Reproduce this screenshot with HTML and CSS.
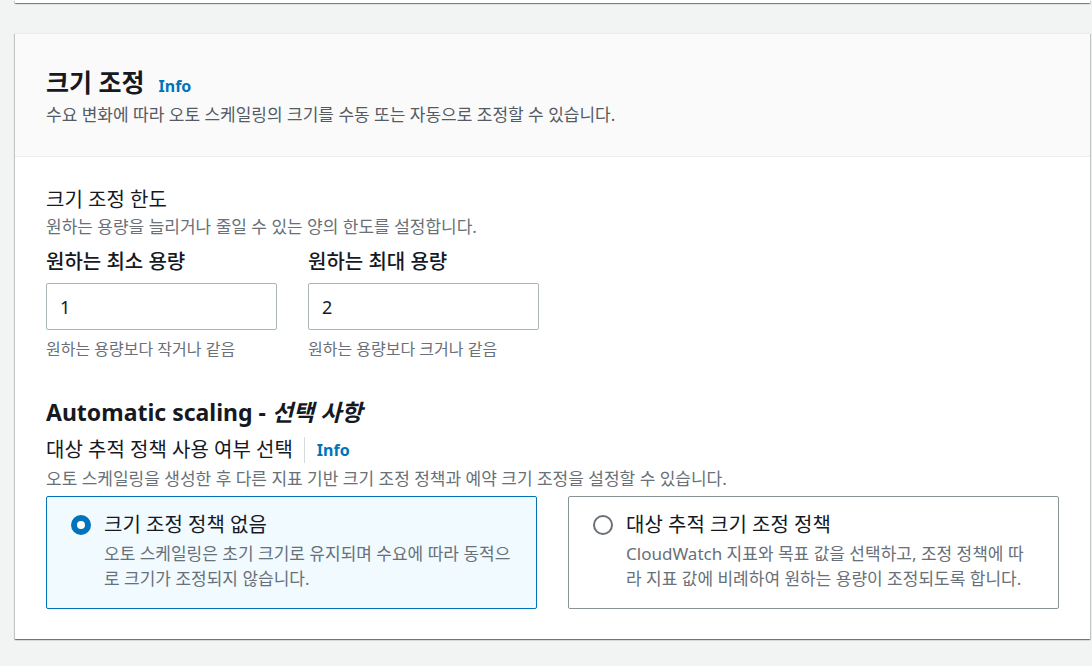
FILE: index.html
```html
<!DOCTYPE html>
<html lang="ko">
<head>
    <meta charset="UTF-8">
    <meta name="viewport" content="width=device-width, initial-scale=1.0">
    <title>크기 조정</title>
    <link rel="stylesheet" href="styles.css">
</head>
<body>

<div class="prev-card"></div>

<section class="panel">
    <header class="panel-header">
        <h2>크기 조정<a href="#" class="info">Info</a></h2>
        <p class="panel-desc">수요 변화에 따라 오토 스케일링의 크기를 수동 또는 자동으로 조정할 수 있습니다.</p>
    </header>

    <div class="panel-body">
        <div class="group-title">크기 조정 한도</div>
        <p class="group-desc">원하는 용량을 늘리거나 줄일 수 있는 양의 한도를 설정합니다.</p>

        <div class="fields">
            <div class="field">
                <label for="min-cap">원하는 최소 용량</label>
                <input type="text" id="min-cap" value="1">
                <span class="hint">원하는 용량보다 작거나 같음</span>
            </div>
            <div class="field">
                <label for="max-cap">원하는 최대 용량</label>
                <input type="text" id="max-cap" value="2">
                <span class="hint">원하는 용량보다 크거나 같음</span>
            </div>
        </div>

        <h3>Automatic scaling - <em>선택 사항</em></h3>
        <div class="group-title with-info">
            <span>대상 추적 정책 사용 여부 선택</span>
            <a href="#" class="info">Info</a>
        </div>
        <p class="group-desc">오토 스케일링을 생성한 후 다른 지표 기반 크기 조정 정책과 예약 크기 조정을 설정할 수 있습니다.</p>

        <div class="tiles">
            <label class="tile selected">
                <span class="radio checked"></span>
                <span class="tile-text">
                    <span class="tile-title">크기 조정 정책 없음</span>
                    <span class="tile-desc">오토 스케일링은 초기 크기로 유지되며 수요에 따라 동적으<br>로 크기가 조정되지 않습니다.</span>
                </span>
            </label>
            <label class="tile">
                <span class="radio"></span>
                <span class="tile-text">
                    <span class="tile-title">대상 추적 크기 조정 정책</span>
                    <span class="tile-desc">CloudWatch 지표와 목표 값을 선택하고, 조정 정책에 따<br>라 지표 값에 비례하여 원하는 용량이 조정되도록 합니다.</span>
                </span>
            </label>
        </div>
    </div>
</section>

</body>
</html>
```

FILE: styles.css
```css
body {
    margin: 0;
    padding: 0;
    background-color: #f2f3f3;
    font-family: "Noto Sans", "Noto Sans CJK KR", sans-serif;
    color: #16191f;
}

.prev-card {
    height: 3px;
    margin: 0 2px 0 15px;
    background-color: #fff;
    box-shadow: 0 1px 1px 0 rgba(0, 28, 36, 0.4), 1px 1px 1px 0 rgba(0, 28, 36, 0.15), -1px 1px 1px 0 rgba(0, 28, 36, 0.15);
}

.panel {
    margin: 30px 2px 28px 15px;
    background-color: #fff;
    border-top: 1px solid #eaeded;
    box-shadow: 0 1px 1px 0 rgba(0, 28, 36, 0.4), 1px 1px 1px 0 rgba(0, 28, 36, 0.15), -1px 1px 1px 0 rgba(0, 28, 36, 0.15);
}

.panel-header {
    background-color: #fafafa;
    border-bottom: 1px solid #eaeded;
    padding: 32px 31px 30px;
}

.panel-header h2 {
    margin: 0;
    font-size: 25px;
    line-height: 32px;
    font-weight: bold;
}

.info {
    color: #0073bb;
    font-size: 16px;
    font-weight: bold;
    text-decoration: none;
    margin-left: 14px;
}

.panel-desc {
    margin: 2px 0 0;
    font-size: 17px;
    line-height: 22px;
    color: #545b64;
}

.panel-body {
    padding: 30px 31px 30px;
}

.group-title {
    font-size: 20px;
    line-height: 26px;
}

.group-title.with-info {
    display: flex;
    align-items: center;
}

.group-title.with-info .info {
    margin-left: 11px;
    padding-left: 12px;
    border-left: 1px solid #d5dbdb;
    line-height: 26px;
}

.group-desc {
    margin: 3px 0 0;
    font-size: 17px;
    line-height: 22px;
    color: #687078;
}

.fields {
    display: flex;
    gap: 31px;
    margin-top: 11px;
}

.field {
    display: flex;
    flex-direction: column;
    width: 231px;
}

.field label {
    font-size: 20px;
    line-height: 26px;
    font-weight: 500;
}

.field input {
    box-sizing: border-box;
    height: 47px;
    margin-top: 8px;
    padding: 0 13px;
    border: 1px solid #aab7b8;
    border-radius: 2px;
    font-family: inherit;
    font-size: 18px;
    color: #16191f;
    background-color: #fff;
}

.hint {
    margin-top: 8px;
    font-size: 16px;
    line-height: 22px;
    color: #687078;
}

h3 {
    margin: 36px 0 0;
    font-size: 23px;
    line-height: 32px;
    font-weight: bold;
}

h3 em {
    font-style: italic;
}

.panel-body h3 + .group-title {
    margin-top: 9px;
}

.panel-body h3 + .group-title + .group-desc {
    margin-top: 5px;
}

.tiles {
    display: grid;
    grid-template-columns: 1fr 1fr;
    gap: 31px;
    margin-top: 6px;
}

.tile {
    display: flex;
    align-items: flex-start;
    padding: 15px 13px 17px 24px;
    border: 1px solid #879596;
    border-radius: 2px;
    background-color: #fff;
    cursor: pointer;
}

.tile.selected {
    border-color: #0073bb;
    background-color: #f1faff;
}

.radio {
    box-sizing: border-box;
    flex: none;
    width: 20px;
    height: 20px;
    margin-top: 3px;
    margin-right: 13px;
    border: 2px solid #687078;
    border-radius: 50%;
    background-color: #fff;
}

.radio.checked {
    border: 6px solid #0073bb;
}

.tile-text {
    display: flex;
    flex-direction: column;
}

.tile-title {
    font-size: 20px;
    line-height: 26px;
}

.tile-desc {
    margin-top: 3px;
    font-size: 17px;
    line-height: 25px;
    color: #687078;
}
```
